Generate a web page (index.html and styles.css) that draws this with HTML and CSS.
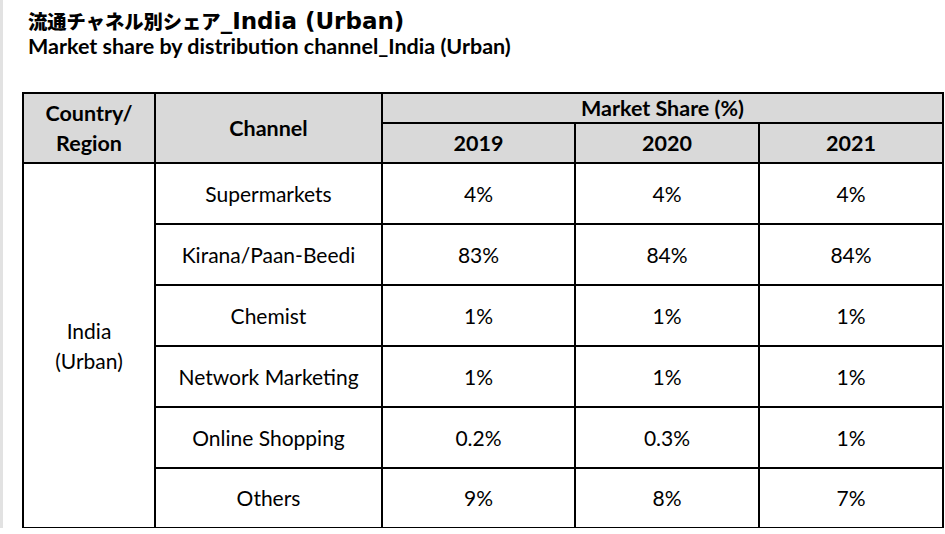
FILE: index.html
```html
<!DOCTYPE html>
<html lang="ja">
<head>
<meta charset="utf-8">
<title>Market share by distribution channel_India (Urban)</title>
<link rel="stylesheet" href="styles.css">
</head>
<body>
<div class="page">
  <h1 class="title-jp"><span class="jp">流通チャネル別シェア</span><span class="lat">_India (Urban)</span></h1>
  <h2 class="title-en">Market share by distribution channel_India (Urban)</h2>
  <div class="grid">
    <div class="cell head c-country">Country/<br>Region</div>
    <div class="cell head c-channel">Channel</div>
    <div class="cell head c-share">Market Share (%)</div>
    <div class="cell head">2019</div>
    <div class="cell head">2020</div>
    <div class="cell head">2021</div>

    <div class="cell c-region">India<br>(Urban)</div>
    <div class="cell">Supermarkets</div><div class="cell">4%</div><div class="cell">4%</div><div class="cell">4%</div>
    <div class="cell">Kirana/Paan-Beedi</div><div class="cell">83%</div><div class="cell">84%</div><div class="cell">84%</div>
    <div class="cell">Chemist</div><div class="cell">1%</div><div class="cell">1%</div><div class="cell">1%</div>
    <div class="cell">Network Marketing</div><div class="cell">1%</div><div class="cell">1%</div><div class="cell">1%</div>
    <div class="cell">Online Shopping</div><div class="cell">0.2%</div><div class="cell">0.3%</div><div class="cell">1%</div>
    <div class="cell">Others</div><div class="cell">9%</div><div class="cell">8%</div><div class="cell">7%</div>
  </div>
</div>
</body>
</html>
```

FILE: styles.css
```css
* { box-sizing: border-box; }
html, body { margin: 0; padding: 0; background: #fff; }
body {
  font-family: "Lato", "Noto Sans CJK JP", sans-serif;
  color: #000;
}
.page {
  width: 945px;
  height: 528px;
  border-left: 3px solid #e2e2e2;
  padding: 3px 0 0 19px;
}
.title-jp {
  margin: 0 0 0 6px;
  font-weight: 700;
  line-height: 28px;
  height: 28px;
  white-space: nowrap;
}
.title-jp .jp {
  font-family: "Noto Sans CJK JP", sans-serif;
  font-size: 19.3px;
  font-weight: 900;
}
.title-jp .lat {
  font-family: "DejaVu Sans", "Noto Sans CJK JP", sans-serif;
  font-size: 23px;
}
.title-en {
  margin: 1px 0 0 6px;
  font-size: 21.5px;
  font-weight: 700;
  line-height: 28px;
  white-space: nowrap;
}
.grid {
  margin-top: 32px;
  display: grid;
  width: 922px;
  grid-template-columns: 132px 227px 193px 184px 184px;
  grid-template-rows: 30px 40px 61px 61px 61px 61px 61px 60px;
  border-left: 2px solid #000;
  border-top: 2px solid #000;
}
.cell {
  border-right: 2px solid #000;
  border-bottom: 2px solid #000;
  display: flex;
  align-items: center;
  justify-content: center;
  text-align: center;
  font-size: 21px;
  line-height: 30px;
}
.head {
  background: #d9d9d9;
  font-weight: 700;
  font-size: 21.5px;
}
.c-country { grid-row: 1 / span 2; }
.c-channel { grid-row: 1 / span 2; }
.c-share { grid-column: 3 / span 3; }
.c-region { grid-row: 3 / span 6; }
```
